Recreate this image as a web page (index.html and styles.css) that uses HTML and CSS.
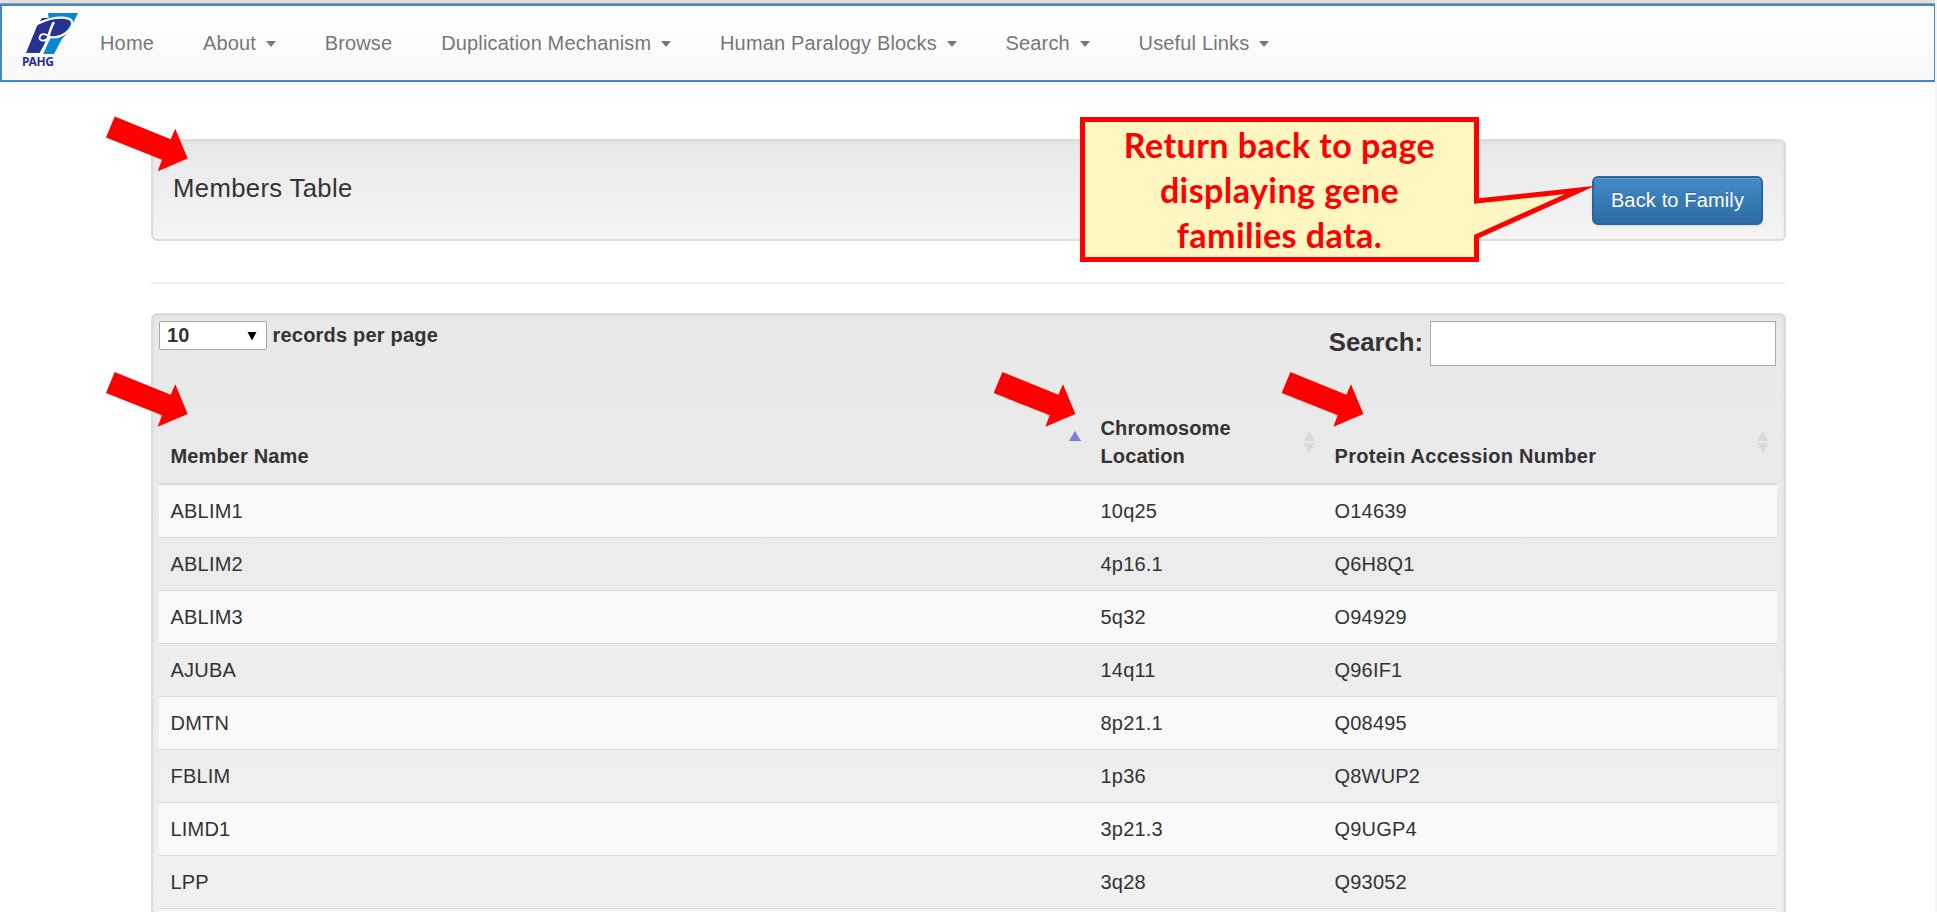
FILE: index.html
```html
<!DOCTYPE html>
<html lang="en">
<head>
<meta charset="utf-8">
<title>Members Table</title>
<link rel="stylesheet" href="styles.css">
</head>
<body>
<div class="page">
  <nav class="navbar">
    <svg class="logo" width="60" height="60" viewBox="0 0 60 60" role="img" aria-label="PAHG">
      <path fill="#0a86d0" d="M28 0H58L50 17L42 26L34 41H23L31 24Z"/>
      <path fill="#263290" d="M22 5H44Q53 6 49 13Q45 23 34 24L29 23L19.500 40H6L17 13Z"/>
      <g fill="none" stroke="#fff" stroke-linecap="round">
        <path stroke-width="2.500" d="M33.500 10C29 17 28 29 21.500 41"/>
        <path stroke-width="2.300" d="M31 24C40 26 51 18 52.500 11C53 4 41 3.500 30 6C24 7.500 20 10 15 11.500"/>
        <path stroke-width="1.800" d="M31 24C27 28 20 29 19.500 25C20 21 24 20.500 27 22"/>
      </g>
      <text class="logo-text" x="2" y="53" textLength="32">PAHG</text>
    </svg>
    <ul class="menu">
      <li>Home</li>
      <li>About<i class="caret"></i></li>
      <li>Browse</li>
      <li>Duplication Mechanism<i class="caret"></i></li>
      <li>Human Paralogy Blocks<i class="caret"></i></li>
      <li>Search<i class="caret"></i></li>
      <li>Useful Links<i class="caret"></i></li>
    </ul>
  </nav>
  <main class="container">
    <header class="well heading">
      <h1 class="title">Members Table</h1>
      <button class="back">Back to Family</button>
    </header>
    <hr class="rule">
    <section class="well data">
      <div class="controls">
        <label class="length"><span class="select">10<svg width="10" height="10" viewBox="0 0 10 10"><path d="M0.5 1H9.5L5 9.5Z"/></svg></span>records per page</label>
        <label class="search">Search:<input class="search-box" type="text"></label>
      </div>
      <table class="members">
        <colgroup><col class="c1"><col class="c2"><col class="c3"></colgroup>
        <thead><tr>
          <th><div class="head">Member Name<svg class="sort" width="12" height="22" viewBox="0 0 12 22"><path fill="#7c7ce0" d="M6 0L12 10H0Z"/></svg></div></th>
          <th><div class="head">Chromosome<br>Location<svg class="sort" width="12" height="22" viewBox="0 0 12 22"><path fill="#dadada" d="M6 0L12 10H0ZM0 12H12L6 22Z"/></svg></div></th>
          <th><div class="head protein">Protein Accession Number<svg class="sort" width="12" height="22" viewBox="0 0 12 22"><path fill="#dadada" d="M6 0L12 10H0ZM0 12H12L6 22Z"/></svg></div></th>
        </tr></thead>
        <tbody>
          <tr><td>ABLIM1</td><td>10q25</td><td>O14639</td></tr>
          <tr><td>ABLIM2</td><td>4p16.1</td><td>Q6H8Q1</td></tr>
          <tr><td>ABLIM3</td><td>5q32</td><td>O94929</td></tr>
          <tr><td>AJUBA</td><td>14q11</td><td>Q96IF1</td></tr>
          <tr><td>DMTN</td><td>8p21.1</td><td>Q08495</td></tr>
          <tr><td>FBLIM</td><td>1p36</td><td>Q8WUP2</td></tr>
          <tr><td>LIMD1</td><td>3p21.3</td><td>Q9UGP4</td></tr>
          <tr><td>LPP</td><td>3q28</td><td>Q93052</td></tr>
          <tr><td></td><td></td><td></td></tr>
        </tbody>
      </table>
    </section>
  </main>
  <svg class="notes" width="1937" height="912" viewBox="0 0 1937 912">
    <defs><path id="arrow" fill="#f00" d="M8.7 0L64.7 22.7L69.3 12.3L81.7 42L51.7 54.7L56 43.3L0 21Z"/></defs>
    <use href="#arrow" x="106" y="116.5"/>
    <use href="#arrow" x="106" y="372"/>
    <use href="#arrow" x="993.7" y="372"/>
    <use href="#arrow" x="1281.7" y="372"/>
    <path fill="#fff6c1" stroke="#f00" stroke-width="5" stroke-miterlimit="20" d="M1082.5 119.5H1476.5V201L1580 190L1476.5 236.5V259.500H1082.5Z"/>
  </svg>
  <p class="callout">Return back to page<br>displaying gene<br>families data.</p>
</div>
</body>
</html>
```
FILE: styles.css
```css
* { box-sizing: border-box; }
body { margin: 0; background: #fff; }
.page {
  position: relative;
  height: 912px;
  overflow: hidden;
  padding-top: 4px;
  border-right: 2px solid #f4f4f4;
  background: linear-gradient(#e2e2e2 3px, #a0a0a0 3px, #a0a0a0 4px, #fff 4px);
  font: 20px/33px "Liberation Sans", Arial, sans-serif;
  color: #333;
}
.navbar {
  display: flex;
  height: 78px;
  margin-right: -1px;
  padding: 7px 0 0 18px;
  border: 2px solid #4189c7;
  background: linear-gradient(#fff, #f8f8f8);
  box-shadow: 0 1px 6px rgba(0, 0, 0, .06);
}
.logo { flex: none; }
.logo-text { font: bold 12px "Noto Sans", sans-serif; fill: #263290; }
.menu { display: flex; margin: 14px 0 0; padding: 0; list-style: none; color: #777; letter-spacing: .16px; }
.menu li { display: flex; align-items: center; height: 33px; padding: 0 24.6px 0 24.3px; white-space: nowrap; }
.menu li:first-child { padding-left: 20px; }
.caret { margin: 1px 0 0 9.8px; border: 5.5px solid transparent; border-top: 6px solid #777; border-bottom: 0; }
.container { width: 1635px; margin: 57px 0 0 151px; }
.well {
  border: 2px solid #dcdcdc;
  border-radius: 6px;
  background: linear-gradient(#e8e8e8, #f5f5f5);
  box-shadow: inset 0 1px 4px rgba(0, 0, 0, .05);
}
.heading { display: flex; justify-content: space-between; height: 102px; padding: 35px 21px 0 20px; }
.title { margin: -6px 0 0; font-size: 25.7px; font-weight: 400; line-height: 36px; letter-spacing: .35px; }
.back {
  width: 171px;
  height: 49px;
  padding: 0;
  border: 2px solid #2b669a;
  border-radius: 6px;
  background: linear-gradient(#428bca, #2d6ca2);
  box-shadow: inset 0 1px 0 rgba(255, 255, 255, .15), 0 1px 2px rgba(0, 0, 0, .1);
  color: #fff;
  font: 20px "Liberation Sans", Arial, sans-serif;
  letter-spacing: .15px;
  text-shadow: 0 -1px 0 rgba(0, 0, 0, .2);
}
.rule { height: 2px; margin: 41px 0 29px; border: 0; background: #efefef; }
.data { height: 720px; padding: 7px 6px 0 6px; background: linear-gradient(#e8e8e8, #f2f2f2 720px); }
.controls { display: flex; justify-content: space-between; height: 80px; margin-top: -1px; font-weight: 700; }
.length { display: flex; align-items: center; height: 29px; letter-spacing: .2px; }
.select {
  display: flex;
  align-items: center;
  justify-content: space-between;
  width: 108px;
  height: 29px;
  margin-right: 5.5px;
  padding: 0 9px 0 7px;
  border: 1.5px solid #a9a9a9;
  border-radius: 2px;
  background: #fff;
}
.search { display: flex; font-size: 25.7px; line-height: 42px; }
.search-box { width: 346px; height: 45px; margin: 0 2px 0 7px; border: 1.5px solid #aaa; background: #fff; }
.members { width: 1618px; table-layout: fixed; border-collapse: separate; border-spacing: 0; }
.c1 { width: 930px; }
.c2 { width: 234px; }
.c3 { width: 454px; }
.members th { height: 84px; padding: 0 8px 12px 11.5px; border-bottom: 2px solid #d9d9d9; text-align: left; vertical-align: bottom; line-height: 28.6px; letter-spacing: .14px; }
.head { position: relative; }
.protein { letter-spacing: .29px; }
.sort { position: absolute; right: 0; bottom: 18px; }
.members td { height: 53px; padding: 0 11.5px; border-bottom: 1px solid #d9d9d9; letter-spacing: .2px; }
.members tbody tr:nth-child(odd) td { background: #f9f9f9; }
.notes { position: absolute; left: 0; top: 0; }
.callout {
  position: absolute;
  left: 1085px;
  top: 122px;
  width: 389px;
  margin: 0;
  color: #f00;
  font: 700 34px/45px Lato, sans-serif;
  letter-spacing: .45px;
  text-align: center;
}
```
